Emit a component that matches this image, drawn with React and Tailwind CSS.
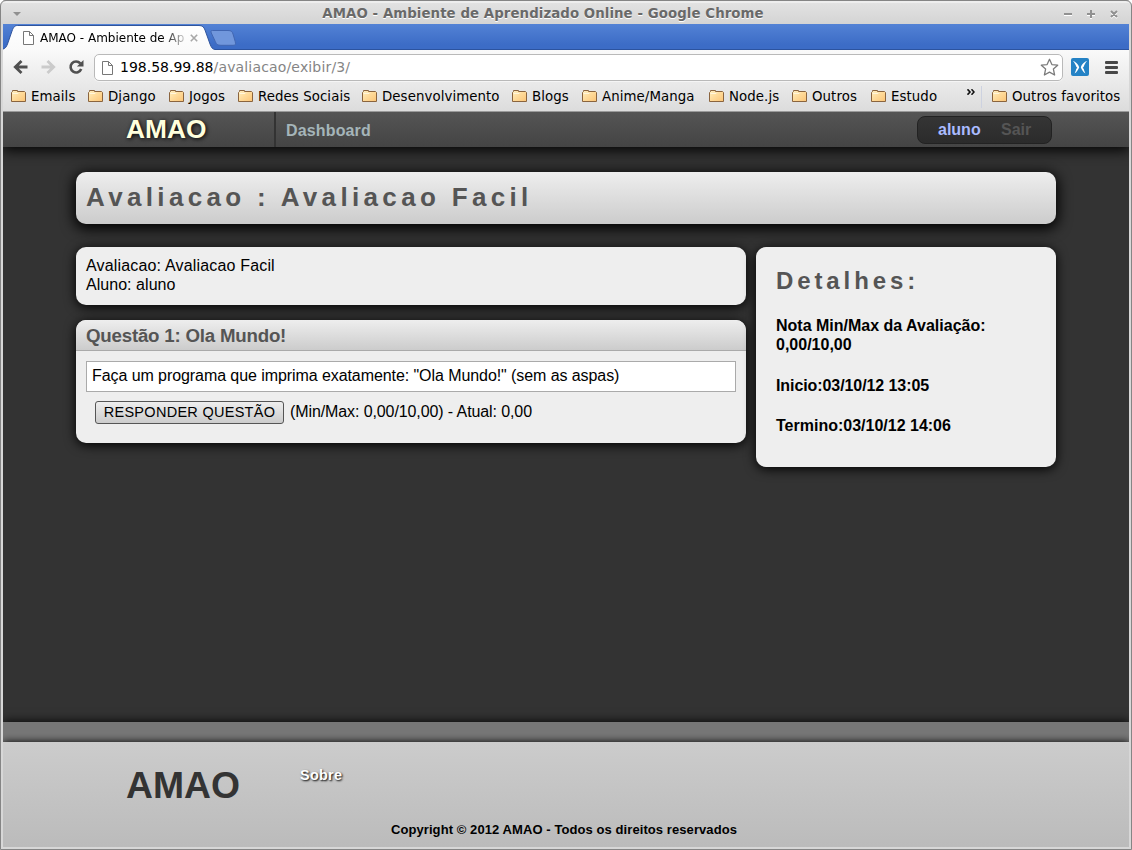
import React from "react";

const bookmarks = [
  { label: "Emails", width: "w-[77px]" },
  { label: "Django", width: "w-[81px]" },
  { label: "Jogos", width: "w-[69px]" },
  { label: "Redes Sociais", width: "w-[124px]" },
  { label: "Desenvolvimento", width: "w-[150px]" },
  { label: "Blogs", width: "w-[70px]" },
  { label: "Anime/Manga", width: "w-[127px]" },
  { label: "Node.js", width: "w-[83px]" },
  { label: "Outros", width: "w-[79px]" },
  { label: "Estudo", width: "w-[95px]" },
];

function PageIcon() {
  return (
    <svg width="11" height="14" viewBox="0 0 11 14" className="block shrink-0">
      <path d="M.5.5h6l4 4v9H.5z" fill="#fff" stroke="#777" />
      <path d="M6.5.5v4h4" fill="none" stroke="#777" />
    </svg>
  );
}

function FolderIcon() {
  return (
    <svg width="16" height="13" viewBox="0 0 16 13" className="block shrink-0">
      <defs>
        <linearGradient id="folder" x1="0" y1="0" x2="1" y2="1">
          <stop offset="0" stopColor="#fff0c4" />
          <stop offset=".45" stopColor="#ffdc9c" />
          <stop offset="1" stopColor="#fbc476" />
        </linearGradient>
      </defs>
      <path d="M.5 11.5V2.5L1.5 1.5V.5H6.5V1.5H13.5L14.5 2.5V11.5H.5Z" fill="url(#folder)" stroke="#8a643e" />
      <path d="M1.5 3.5H7l1-1" fill="none" stroke="#fff6dc" />
    </svg>
  );
}

function Bookmark({ label, width }) {
  return (
    <div className={"flex shrink-0 items-center gap-1 whitespace-nowrap " + width}>
      <FolderIcon />
      <span>{label}</span>
    </div>
  );
}

function TitleBar() {
  return (
    <div className="flex h-6 shrink-0 items-center bg-linear-to-b from-[#e4e4e4] to-[#d4d4d4] pt-[3px] shadow-[inset_0_1px_0_#8c8c8c,inset_0_3px_0_#eeeeee]">
      <svg width="8" height="6" viewBox="0 0 8 6" className="ml-[13px] shrink-0">
        <path d="M0 1h8L4 5z" fill="#909090" />
      </svg>
      <div className="ml-[2px] grow text-center text-[13.33px] leading-5 font-bold tracking-[0.07px] text-[#696969] [text-shadow:0_1px_0_#fff]">
        AMAO - Ambiente de Aprendizado Online - Google Chrome
      </div>
      <svg width="56" height="10" viewBox="0 0 56 10" className="mr-[13px] shrink-0" fill="none" stroke="#919191" strokeWidth="2">
        <path d="M1 6h8M24 6h8M28 2v8M48 3l6 6M54 3l-6 6" stroke="#fff" />
        <path d="M1 5h8M24 5h8M28 1v8M48 2l6 6M54 2l-6 6" />
      </svg>
    </div>
  );
}

function TabStrip() {
  return (
    <div className="relative mx-[3px] flex h-[26px] shrink-0 bg-linear-to-b from-[#5382d5] to-[#3c6cc6] to-80%">
      <svg width="1126" height="26" viewBox="0 0 1126 26" className="absolute inset-0">
        <defs>
          <linearGradient id="tab" x1="0" y1="0" x2="0" y2="1">
            <stop offset="0" stopColor="#fff" />
            <stop offset="1" stopColor="#fafafa" />
          </linearGradient>
        </defs>
        <path d="M0 25.5h1126" stroke="#2c539f" />
        <path
          d="M0 26V25.3C2.5 24.5 3.5 22.5 4.5 20L9 7C10.5 3 11.8 1.8 14.5 1.8H196C199.5 1.8 200.8 3 202 6L207 20C208.3 23.5 209.5 25.2 212 25.5V26Z"
          fill="url(#tab)"
        />
        <path
          d="M0 25C2.5 24.5 3.5 22.5 4.5 20L9 7C10.5 3 11.8 1.5 14.5 1.5H196C199.5 1.5 200.8 3 202 6L207 20C208.3 23.5 209.5 25.2 212 25.5"
          fill="none"
          stroke="#31559c"
        />
        <path
          d="M209.5 6.5H225C228.3 6.5 229.2 7.5 230 10L232.2 17.5C233 20.5 232.3 21.3 230 21.3H218C214.5 21.3 213.3 20.3 212.3 17.5L208.3 9C207.5 7.2 208 6.5 209.5 6.5Z"
          fill="#7197dc"
          stroke="#4166b1"
        />
      </svg>
      <div className="relative flex h-full w-[210px] items-center pt-[2px] pl-[20px]">
        <PageIcon />
        <span className="ml-[6px] w-[144px] overflow-hidden text-[12px] leading-4 whitespace-nowrap text-black [mask-image:linear-gradient(to_right,#000_122px,transparent_150px)]">
          AMAO - Ambiente de Ap
        </span>
        <svg width="8" height="8" viewBox="0 0 8 8" className="ml-[6px] shrink-0">
          <path d="M.8.8l6.4 6.4M7.2.8L.8 7.2" stroke="#a8a8a8" strokeWidth="1.6" />
        </svg>
      </div>
    </div>
  );
}

function Toolbar() {
  return (
    <div className="flex h-[34px] items-center pt-px">
      <svg width="15" height="14" viewBox="0 0 15 14" className="mb-px ml-[10px] shrink-0" fill="none" stroke="#505050" strokeWidth="2.8">
        <path d="M14.5 7H3M8.5 1L2.3 7L8.5 13" />
      </svg>
      <svg width="15" height="14" viewBox="0 0 15 14" className="mb-px ml-[13px] shrink-0" fill="none" stroke="#cbcbcb" strokeWidth="2.8">
        <path d="M.5 7h11.5M6.5 1L12.7 7L6.5 13" />
      </svg>
      <svg width="16" height="16" viewBox="0 0 16 16" className="mb-px ml-[12px] shrink-0">
        <path d="M12.3 4.4A5.5 5.5 0 1 0 13.2 10" fill="none" stroke="#505050" strokeWidth="2.6" />
        <path d="M15.5 1v6.6H8.9z" fill="#505050" />
      </svg>
      <div className="ml-[10px] flex h-[27px] w-[969px] shrink-0 items-center rounded-[5px] border border-[#b9b9b9] bg-white pl-[7px] shadow-[0_1px_0_#f5f5f5]">
        <PageIcon />
        <div className="mb-px ml-[7px] grow text-[14px] leading-5 tracking-[0.16px] text-[#858585]">
          <span className="tracking-normal text-black">198.58.99.88</span>/avaliacao/exibir/3/
        </div>
        <svg width="19" height="19" viewBox="0 0 19 19" className="mr-[3px] shrink-0">
          <path
            d="M9.5 1.3L11.9 6.6L17.7 7.2L13.4 11.1L14.6 17L9.5 14.1L4.4 17L5.6 11.1L1.3 7.2L7.1 6.6Z"
            fill="#fff"
            stroke="#7c7c7c"
            strokeWidth="1.3"
            strokeLinejoin="round"
          />
        </svg>
      </div>
      <svg width="18" height="18" viewBox="0 0 18 18" className="mb-px ml-[8px] shrink-0">
        <rect width="18" height="18" rx="2" fill="#2482c5" />
        <path d="M1.8 2.8C4.5 4 7.3 6 8.2 9.2C7.4 11.6 6 13.6 3.6 15.6C4.6 13.6 5.2 11.6 5.6 9.6C4.9 7.2 3.6 4.8 1.8 2.8Z" fill="#fff" />
        <path d="M16.2 2.8C13.5 4 10.7 6 9.8 9.2C10.6 11.6 12 13.6 14.4 15.6C13.4 13.6 12.8 11.6 12.4 9.6C13.1 7.2 14.4 4.8 16.2 2.8Z" fill="#fff" />
        <path d="M3 8.6L6.4 9.5L3.6 12.5ZM15 8.6L11.6 9.5L14.4 12.5Z" fill="#2482c5" />
      </svg>
      <svg width="13" height="13" viewBox="0 0 13 13" className="ml-[16px] shrink-0">
        <path d="M1.2 1.5h10.6M1.2 6.5h10.6M1.2 11.5h10.6" stroke="#484848" strokeWidth="3" strokeLinecap="round" />
      </svg>
    </div>
  );
}

function BookmarksBar() {
  return (
    <div className="flex h-[25px] items-center pl-2 text-[13.33px] tracking-[0.08px] text-black">
      {bookmarks.map((item) => (
        <Bookmark key={item.label} {...item} />
      ))}
      <svg width="8" height="6" viewBox="0 0 8 6" className="mb-[9px] ml-px shrink-0" fill="none" stroke="#111" strokeWidth="1.6">
        <path d="M.5.3L3 3L.5 5.7M4.5.3L7 3L4.5 5.7" />
      </svg>
      <div className="ml-[6px] h-[22px] w-px bg-[#cdd2e0]" />
      <div className="ml-[10px]">
        <Bookmark label="Outros favoritos" width="w-[130px]" />
      </div>
    </div>
  );
}

function SiteHeader() {
  return (
    <header className="relative flex h-[35px] shrink-0 bg-linear-to-b from-[#555] to-[#444] shadow-[0_2px_14px_1px_#000]">
      <div className="h-full w-[273px] border-r-2 border-[#333] pl-[123px] text-[26.3px] leading-[35px] font-bold text-[#ffffdd] [text-shadow:1px_1px_4px_#000]">
        AMAO
      </div>
      <div className="grow pl-[10px] text-[16px] leading-[37px] font-bold tracking-[0.15px] text-[#a5b5b9]">Dashboard</div>
      <nav className="mt-1 mr-[77px] flex h-[28px] w-[135px] rounded-lg border border-[#222] bg-linear-to-b from-[#353535] to-[#2b2b2b] pl-5 text-[16px] leading-[25px] font-bold">
        <span className="w-[63px] text-[#aabbff]">aluno</span>
        <span className="text-[#555]">Sair</span>
      </nav>
    </header>
  );
}

function Details() {
  return (
    <aside className="h-[220px] w-[300px] rounded-[10px] bg-[#eee] px-5 pt-[19px] text-[16px] leading-[19px] font-bold text-black shadow-[0_2px_12px_#000]">
      <h2 className="text-[24px] leading-[30px] tracking-[3.9px] text-[#555]">Detalhes:</h2>
      <p className="mt-5">
        Nota Min/Max da Avaliação:
        <br />
        0,00/10,00
      </p>
      <p className="mt-[22px] tracking-[-0.08px]">Inicio:03/10/12 13:05</p>
      <p className="mt-[21px]">Termino:03/10/12 14:06</p>
    </aside>
  );
}

function Question() {
  return (
    <section className="mt-[15px] h-[123px] overflow-hidden rounded-[10px] bg-[#eee] shadow-[0_2px_12px_#000]">
      <h3 className="h-[31px] border-b border-[#aaa] bg-linear-to-b from-[#eee] to-[#ccc] pl-[10px] text-[18.7px] leading-[31px] font-bold tracking-[-0.21px] text-[#555]">
        Questão 1: Ola Mundo!
      </h3>
      <div className="mx-[10px] mt-[10px] h-[31px] border border-[#aaa] bg-white pl-[5px] leading-[28px] tracking-[-0.075px]">
        Faça um programa que imprima exatamente: "Ola Mundo!" (sem as aspas)
      </div>
      <div className="mt-[9px] flex pl-[19px]">
        <button className="h-[23px] w-[189px] rounded-[3px] border border-[#555] bg-linear-to-b from-[#eee] to-[#ccc] pb-px text-[14.5px] leading-5 tracking-[0.28px] whitespace-nowrap">
          RESPONDER QUESTÃO
        </button>
        <span className="ml-[6px] leading-[21px] tracking-[-0.1px]">(Min/Max: 0,00/10,00) - Atual: 0,00</span>
      </div>
    </section>
  );
}

function SiteFooter() {
  return (
    <footer className="relative shrink-0 bg-[#777] pt-5 shadow-[0_0_10px_#000]">
      <div className="h-[105px] bg-linear-to-b from-[#ccc] to-[#bbb] shadow-[0_0_8px_#000]">
        <div className="flex h-[75px] pl-[123px]">
          <div className="w-[174px] pt-[19px] text-[37.3px] leading-[48px] font-bold text-[#333]">AMAO</div>
          <a className="pt-[23px] text-[14.4px] leading-[20px] font-bold tracking-[0.3px] text-white [text-shadow:1px_1px_2px_#000]">Sobre</a>
        </div>
        <p className="pr-[4px] pt-[3px] text-center text-[13px] leading-[19px] font-bold tracking-[0.08px] text-black">
          Copyright © 2012 AMAO - Todos os direitos reservados
        </p>
      </div>
    </footer>
  );
}

export default function App() {
  return (
    <div className="flex h-[850px] w-[1132px] flex-col overflow-hidden rounded-t-[6px] bg-[#d7d7d7] font-['DejaVu_Sans',sans-serif]">
      <TitleBar />
      <TabStrip />
      <div className="mx-[3px] h-[62px] shrink-0 border-b border-[#9a9a9a] bg-linear-to-b from-[#fafafa] to-[#dcdcdc]">
        <Toolbar />
        <BookmarksBar />
      </div>
      <div className="mx-[3px] flex h-[735px] shrink-0 flex-col overflow-hidden bg-[#333] font-['Liberation_Sans',Arial,sans-serif]">
        <SiteHeader />
        <main className="mx-[73px] grow pt-[25px]">
          <h1 className="h-[52px] rounded-[10px] bg-linear-to-b from-[#eee] to-[#ccc] pl-[10px] text-[26px] leading-[51px] font-bold tracking-[4.34px] text-[#555] shadow-[0_3px_14px_2px_#000]">
            Avaliacao : Avaliacao Facil
          </h1>
          <div className="mt-[23px] flex items-start gap-[10px]">
            <div className="w-[670px] text-[16px] text-black">
              <section className="h-[58px] rounded-[10px] bg-[#eee] pt-[9px] pl-[10px] leading-[19px] shadow-[0_2px_12px_#000]">
                <p className="tracking-[0.17px]">Avaliacao: Avaliacao Facil</p>
                <p className="tracking-[0.04px]">Aluno: aluno</p>
              </section>
              <Question />
            </div>
            <Details />
          </div>
        </main>
        <SiteFooter />
      </div>
      <div className="pointer-events-none absolute top-0 left-0 h-[850px] w-[1132px] rounded-t-[6px] border border-[#858585]" />
    </div>
  );
}
